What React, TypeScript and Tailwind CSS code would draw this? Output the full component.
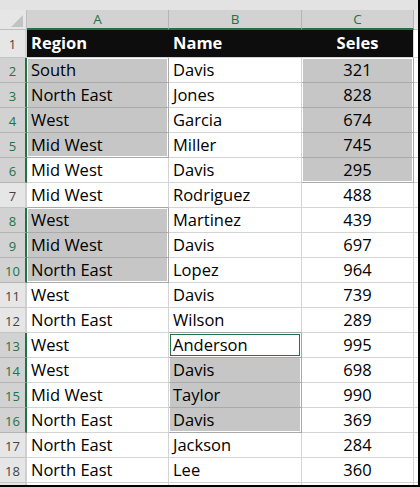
import React from "react";

type Row = [string, string, number];

const rows: Row[] = [
  ["South", "Davis", 321],
  ["North East", "Jones", 828],
  ["West", "Garcia", 674],
  ["Mid West", "Miller", 745],
  ["Mid West", "Davis", 295],
  ["Mid West", "Rodriguez", 488],
  ["West", "Martinez", 439],
  ["Mid West", "Davis", 697],
  ["North East", "Lopez", 964],
  ["West", "Davis", 739],
  ["North East", "Wilson", 289],
  ["West", "Anderson", 995],
  ["West", "Davis", 698],
  ["Mid West", "Taylor", 990],
  ["North East", "Davis", 369],
  ["North East", "Jackson", 284],
  ["North East", "Lee", 360],
];

// selected ranges: A2:A5, A8:A10, B13:B16 (B13 active), C2:C6
const ranges: Record<string, [number, number][]> = {
  A: [
    [2, 5],
    [8, 10],
  ],
  B: [[13, 16]],
  C: [[2, 6]],
};

const findRange = (col: string, r: number) => ranges[col].find(([a, b]) => r >= a && r <= b);
const isSel = (col: string, r: number) => !!findRange(col, r);
const rowSelected = (r: number) => isSel("A", r) || isSel("B", r) || isSel("C", r);

function edgeShadow(top: boolean, bottom: boolean) {
  if (top && bottom) return "shadow-[inset_0_0_0_1px_#fff]";
  if (top) return "shadow-[inset_1px_1px_0_#fff,inset_-1px_0_0_#fff]";
  if (bottom) return "shadow-[inset_1px_0_0_#fff,inset_-1px_-1px_0_#fff]";
  return "shadow-[inset_1px_0_0_#fff,inset_-1px_0_0_#fff]";
}

function Cell({
  col,
  r,
  width,
  center,
  children,
}: {
  col: string;
  r: number;
  width: string;
  center?: boolean;
  children: React.ReactNode;
}) {
  const range = findRange(col, r);
  const active = col === "B" && r === 13;
  const nextSel = isSel(col, r + 1);
  let cls = `${width} flex items-center pt-[1px] border-r border-b `;
  if (active) {
    cls += "bg-white border-[#a6a6a6] shadow-[inset_0_0_0_1px_#fff,inset_0_0_0_2px_#217346]";
  } else if (range) {
    cls += `bg-[#c6c6c6] border-[#aaaaaa] ${edgeShadow(r === range[0], r === range[1])}`;
  } else if (nextSel) {
    cls += "bg-white border-r-[#d4d4d4] border-b-[#a6a6a6]";
  } else {
    cls += "bg-white border-[#d4d4d4]";
  }
  cls += center ? " justify-center" : " pl-[4px]";
  return <div className={cls}>{children}</div>;
}

function RowHeader({ n, sel }: { n: number; sel: boolean }) {
  return (
    <div
      className={
        sel
          ? "w-[27px] flex items-center justify-center pt-[3px] bg-[#d2d2d2] border-b border-[#b4b4b4] border-r-2 border-r-[#217346] text-[#217346] text-[13px]"
          : "w-[27px] flex items-center justify-center pt-[3px] bg-[#e6e6e6] border-b border-[#c4c4c4] border-r-2 border-r-[#d0d0d0] text-[#444444] text-[13px]"
      }
    >
      {n}
    </div>
  );
}

export default function App() {
  return (
    <div className="w-[420px] h-[487px] bg-white border-r-2 border-b-2 border-black overflow-hidden font-['Open_Sans',sans-serif] text-[16.5px] text-black">
      {/* top strip */}
      <div className="h-[10px] bg-[#e3e3e3]" />

      {/* column headers */}
      <div className="flex h-[20px]">
        <div className="w-[27px] bg-[#e6e6e6] border-r border-b border-[#bdbdbd] flex items-end justify-end pr-[3px] pb-[2px]">
          <svg width="12" height="12" viewBox="0 0 12 12">
            <polygon points="12,0 12,12 0,12" fill="#c2c2c2" />
          </svg>
        </div>
        <div className="w-[142px] bg-[#d2d2d2] border-r border-r-[#b4b4b4] border-b-2 border-b-[#217346] flex items-center justify-center text-[13.5px] text-[#217346]">
          A
        </div>
        <div className="w-[133px] bg-[#d2d2d2] border-r border-r-[#b4b4b4] border-b-2 border-b-[#217346] flex items-center justify-center text-[13.5px] text-[#217346]">
          B
        </div>
        <div className="w-[112px] bg-[#d2d2d2] border-r border-r-[#b4b4b4] border-b-2 border-b-[#217346] flex items-center justify-center text-[13.5px] text-[#217346]">
          C
        </div>
        <div className="flex-1 bg-[#e6e6e6] border-b border-[#c4c4c4]" />
      </div>

      {/* row 1: titles */}
      <div className="flex h-[28px]">
        <RowHeader n={1} sel={false} />
        <div className="w-[142px] bg-[#0d0d0d] border-b border-[#d4d4d4] flex items-center pl-[4px] font-bold text-white">
          Region
        </div>
        <div className="w-[133px] bg-[#0d0d0d] border-b border-[#d4d4d4] flex items-center pl-[4px] font-bold text-white">
          Name
        </div>
        <div className="w-[112px] bg-[#0d0d0d] border-r border-b border-[#d4d4d4] flex items-center justify-center font-bold text-white">
          Seles
        </div>
        <div className="flex-1 border-b border-[#d4d4d4]" />
      </div>

      {rows.map(([region, name, sales], i) => {
        const r = i + 2;
        return (
          <div key={r} className="flex h-[25px]">
            <RowHeader n={r} sel={rowSelected(r)} />
            <Cell col="A" r={r} width="w-[142px]">
              {region}
            </Cell>
            <Cell col="B" r={r} width="w-[133px]">
              {name}
            </Cell>
            <Cell col="C" r={r} width="w-[112px]" center>
              {sales}
            </Cell>
            <div className="flex-1 border-b border-[#d4d4d4]" />
          </div>
        );
      })}

      {/* start of row 19 */}
      <div className="flex h-[2px]">
        <div className="w-[27px] bg-[#e6e6e6] border-r-2 border-r-[#d0d0d0]" />
        <div className="w-[142px] border-r border-[#d4d4d4]" />
        <div className="w-[133px] border-r border-[#d4d4d4]" />
        <div className="w-[112px] border-r border-[#d4d4d4]" />
      </div>
    </div>
  );
}
